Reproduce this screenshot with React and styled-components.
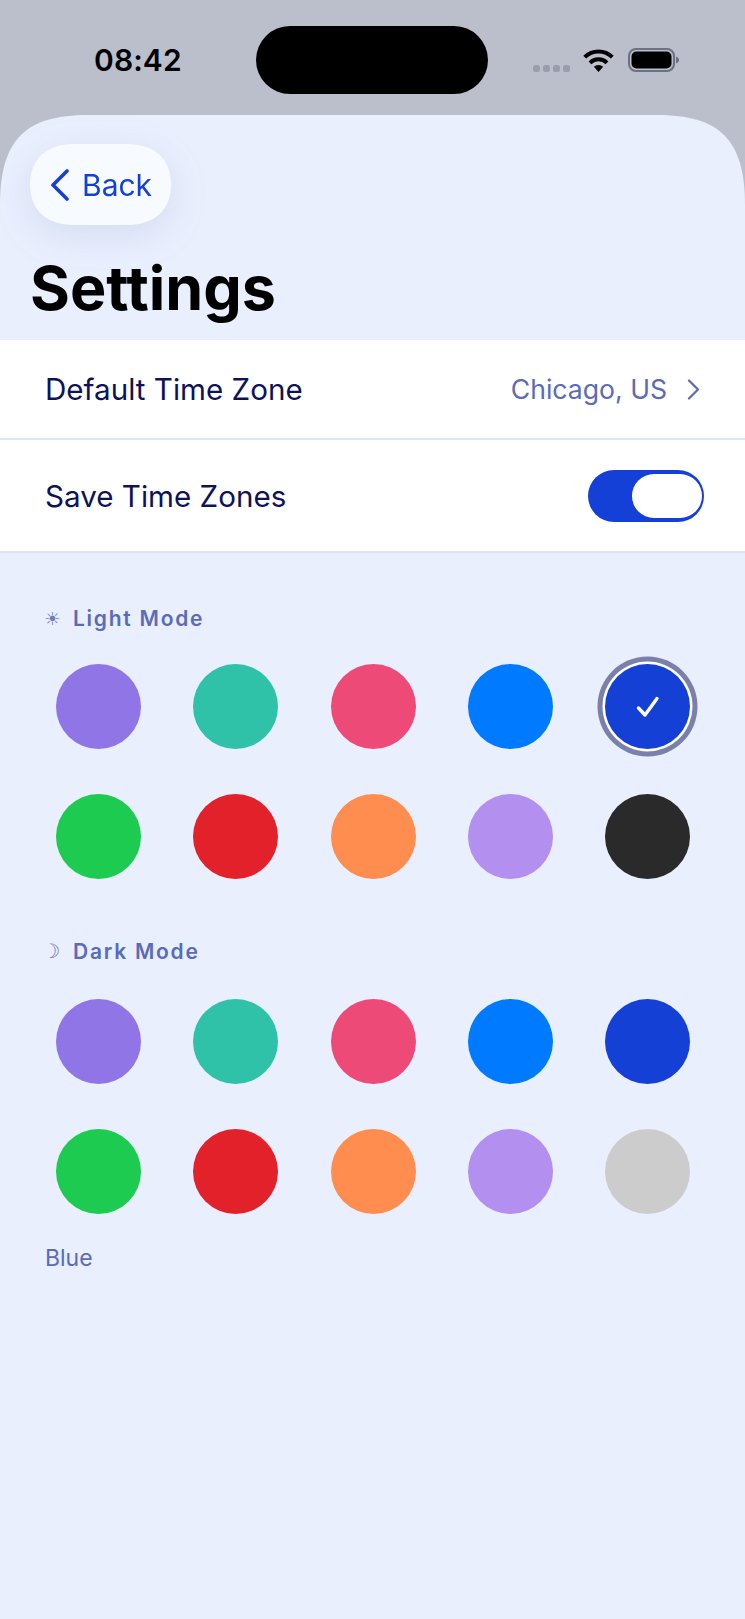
import React from "react";
import styled, { createGlobalStyle } from "styled-components";

const Global = createGlobalStyle`
  html, body { margin: 0; padding: 0; background: #bbbfcc; }
  * { box-sizing: border-box; }
`;
const Page = styled.div`
  width: 745px; height: 1619px; overflow: hidden; background: #bbbfcc;
  font-family: Inter, "Liberation Sans", sans-serif;
  -webkit-font-smoothing: antialiased;
`;
const StatusBar = styled.div`
  height: 115px; padding: 26px 65px 0 94px; display: flex; align-items: flex-start;
`;
const Time = styled.div`
  width: 163px; height: 68px; display: flex; align-items: center;
  font-size: 30px; font-weight: 600; color: #000; letter-spacing: 0.1px;
`;
const Island = styled.div`
  width: 233px; height: 68px; border-radius: 34px; background: #000;
`;
const StatusIcons = styled.div`
  margin-left: 45px; height: 24px; margin-top: 22px; display: flex; align-items: center;
`;
const Dots = styled.div`
  display: flex; gap: 3px; margin-top: 16px; margin-right: 13px;
`;
const Dot = styled.span`
  width: 7px; height: 7px; border-radius: 2.5px; background: #9a9eac;
`;
const Battery = styled.svg`
  margin-left: 14px; display: block;
`;
const Sheet = styled.div`
  height: 1504px; background: #e9effd;
  clip-path: path("M0 90 C0 24 26 0 88 0 H657 C719 0 745 24 745 90 V1504 H0 Z");
`;
const Header = styled.div`
  padding: 29px 30px 0; height: 225px;
`;
const BackShadow = styled.div`
  width: 141px; height: 81px;
  filter: drop-shadow(0 10px 17px rgba(120, 130, 190, 0.17));
`;
const BackButton = styled.div`
  width: 141px; height: 81px; background: #f7fbff;
  clip-path: path("M45 0 H96 C128 0 141 18 141 40.5 C141 63 128 81 96 81 H45 C13 81 0 63 0 40.5 C0 18 13 0 45 0 Z");
  display: flex; align-items: center; padding-left: 20px; gap: 12px;
  color: #1440d8; font-size: 30px; font-weight: 400;
`;
const Title = styled.h1`
  margin: 28px 0 0; font-size: 61px; line-height: 70px; font-weight: 700; color: #000; letter-spacing: 0;
`;
const List = styled.div`
  background: #fff;
`;
const Row = styled.div`
  height: ${p => p.$h}px; padding: 0 ${p => p.$pr}px 0 45px; display: flex; align-items: center; justify-content: space-between;
  border-bottom: 2px solid #dfe4f3;
  font-size: 29.6px; color: #0d1259;
`;
const Value = styled.div`
  display: flex; align-items: center; gap: 20px; font-size: 26.6px; color: #5a6bb8;
`;
const Toggle = styled.div`
  width: 116px; height: 52px; border-radius: 26px; background: #1440d8; padding: 4px 2px;
  display: flex; justify-content: flex-end;
`;
const Knob = styled.div`
  width: 70px; height: 44px; border-radius: 22px; background: #fff;
`;
const Palette = styled.div`
  padding: 50px 55px 0 45px;
`;
const Label = styled.div`
  display: flex; align-items: center; height: 30px; margin-top: ${p => p.$mt || 0}px;
  font-size: 21px; font-weight: 600; letter-spacing: 1.75px; color: #5a6bb8;
`;
const Glyph = styled.span`
  width: ${p => 28 + p.$shift}px; margin-left: ${p => -p.$shift}px;
  font-family: "DejaVu Sans", sans-serif; font-size: ${p => p.$size}px; font-weight: 400; letter-spacing: 0; color: #6f7dc2;
`;
const Grid = styled.div`
  margin: ${p => p.$mt}px 0 0 11px; display: grid; grid-template-columns: repeat(5, 85px); justify-content: space-between; row-gap: 45px;
`;
const Swatch = styled.div`
  width: 85px; height: 85px; border-radius: 50%; background: ${p => p.$c};
  display: flex; align-items: center; justify-content: center;
  ${p => p.$selected ? "box-shadow: 0 0 0 2.5px #fff, 0 0 0 7.5px #7b80ab;" : ""}
`;
const Caption = styled.div`
  margin-top: 29px; font-size: 23px; line-height: 30px; color: #5a6bb8;
`;

const light = ["#8f75e6", "#2fc2a8", "#ee4a78", "#007bff", "#1440d6", "#1ccb4f", "#e3212b", "#ff8d4f", "#b38ff0", "#2a2a2a"];
const dark = ["#8f75e6", "#2fc2a8", "#ee4a78", "#007bff", "#1440d6", "#1ccb4f", "#e3212b", "#ff8d4f", "#b38ff0", "#cccccc"];

export default function App() {
  return (
    <Page>
      <Global />
      <StatusBar>
        <Time>08:42</Time>
        <Island />
        <StatusIcons>
          <Dots><Dot /><Dot /><Dot /><Dot /></Dots>
          <svg width="31" height="23" viewBox="0 0 31 23" style={{ display: "block" }}>
            <path d="M1.7 8.2 A19.5 19.5 0 0 1 29.3 8.2" fill="none" stroke="#000" strokeWidth="4" />
            <path d="M7 13.8 A12 12 0 0 1 24 13.8" fill="none" stroke="#000" strokeWidth="4" />
            <path d="M15.5 23 L10.8 17.8 A7 7 0 0 1 20.2 17.8 Z" fill="#000" />
          </svg>
          <Battery width="52" height="24" viewBox="0 0 52 24">
            <rect x="1" y="1" width="45" height="22" rx="7" fill="none" stroke="#6d7080" strokeWidth="2" />
            <rect x="3.5" y="3.5" width="40" height="17" rx="5" fill="#000" />
            <path d="M48 8.5 C50 9.2 51 10.5 51 12 C51 13.5 50 14.8 48 15.5 Z" fill="#6d7080" />
          </Battery>
        </StatusIcons>
      </StatusBar>
      <Sheet>
        <Header>
          <BackShadow>
            <BackButton>
              <svg width="20" height="32" viewBox="0 0 20 32" fill="none">
                <path d="M17 2 L3 16 L17 30" stroke="#1440d8" strokeWidth="3.6" strokeLinecap="round" strokeLinejoin="round" />
              </svg>
              Back
            </BackButton>
          </BackShadow>
          <Title>Settings</Title>
        </Header>
        <List>
          <Row $h={100} $pr={45}>
            Default Time Zone
            <Value>
              Chicago, US
              <svg width="13" height="21" viewBox="0 0 13 21" fill="none">
                <path d="M2 1.5 L11 10.5 L2 19.5" stroke="#5a6bb8" strokeWidth="2.2" strokeLinecap="round" strokeLinejoin="round" />
              </svg>
            </Value>
          </Row>
          <Row $h={113} $pr={41}>
            Save Time Zones
            <Toggle><Knob /></Toggle>
          </Row>
        </List>
        <Palette>
          <Label><Glyph $size={18} $shift={1}>☀</Glyph>Light Mode</Label>
          <Grid $mt={31}>
            {light.map((c, i) => (
              <Swatch key={i} $c={c} $selected={i === 4}>
                {i === 4 && (
                  <svg width="24" height="24" viewBox="0 0 24 24" fill="none">
                    <path d="M2.5 13 L9 20 L21 3.5" stroke="#fff" strokeWidth="3.4" strokeLinecap="round" strokeLinejoin="round" />
                  </svg>
                )}
              </Swatch>
            ))}
          </Grid>
          <Label $mt={57}><Glyph $size={20} $shift={3}>☽</Glyph>Dark Mode</Label>
          <Grid $mt={33}>
            {dark.map((c, i) => <Swatch key={i} $c={c} />)}
          </Grid>
          <Caption>Blue</Caption>
        </Palette>
      </Sheet>
    </Page>
  );
}
